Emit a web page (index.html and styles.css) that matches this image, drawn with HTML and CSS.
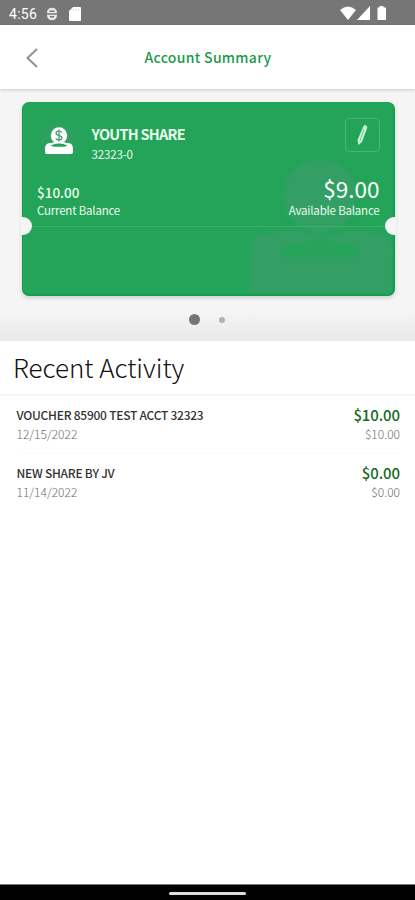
FILE: index.html
```html
<!DOCTYPE html>
<html lang="en">
<head>
<meta charset="utf-8">
<title>Account Summary</title>
<link rel="stylesheet" href="styles.css">
</head>
<body>
<div class="status">
  <span class="time">4:56</span>
  <svg class="s-face" viewBox="0 0 12 14"><path d="M1 5.500a5 4.800 0 0 1 10 0v3a5 4.800 0 0 1-10 0z" fill="#e8e8e8"/><path d="M3.500 4.300h5M1 7h10M4 9.800h4" stroke="#777" stroke-width="1.400" fill="none"/></svg>
  <svg class="s-card" viewBox="0 0 12 14"><path d="M4 0h7q1 0 1 1v12q0 1-1 1H1q-1 0-1-1V4z" fill="#fff"/><path d="M4.500 2v2M7 2v2M9.500 2v2" stroke="#ddd" stroke-width=".9"/></svg>
  <svg class="s-right" viewBox="0 0 48 15"><path d="M0 4Q8-3 16 4L8 14z" fill="#fff"/><path d="M30 0v14H17z" fill="#fff"/><path d="M39.500 0h4v1.500H46V14h-8.500V1.500h2z" fill="#fff"/></svg>
</div>
<header class="header">
  <svg class="back" viewBox="0 0 12 20"><path d="M11 1L1.500 10 11 19" fill="none" stroke="#8e8e9a" stroke-width="1.900"/></svg>
  <h1>Account Summary</h1>
</header>
<section class="carousel">
  <article class="card">
    <svg class="watermark" viewBox="0 0 144 134"><circle cx="71" cy="36" r="37"/><path d="M0 91q0-18 18-18h8q14-6 28-1l17 6 22-6q14-5 28 1h5q18 0 18 18v43H0z"/><path class="slot" d="M31 88q40-14 80 0v9H31z"/></svg>
    <div class="card-top">
      <div class="badge"><svg viewBox="0 0 30 28"><circle cx="15" cy="8.500" r="8.200" fill="#fff"/><path d="M1 22q0-6 5-6h1q4-2 8 1 4-3 8-1h1q5 0 5 6v3q0 2-2 2H3q-2 0-2-2z" fill="#fff"/><path d="M6.500 18.500q8.500-4 17 0l-3 1.300H9.500z" fill="#23a459"/><path d="M18 5.500q-1-1.500-3-1.500-3 0-3 2.200c0 3.200 6 1.400 6 4.400q0 2.400-3 2.400-2.200 0-3.200-1.600M15 2.500v12" fill="none" stroke="#46986a" stroke-width="1.200"/></svg></div>
      <div class="account"><h2>YOUTH SHARE</h2><p>32323-0</p></div>
      <button class="edit" aria-label="Edit"><svg viewBox="0 0 12 22"><path d="M7.300 2.500Q8.500.4 10.300 1.500q1.500 1 .8 2.800L6 18l-3.600 3L1.500 16z" fill="#c8f0d3"/><path d="M8 5L4 17" stroke="#7fce9a" stroke-width="1"/></svg></button>
    </div>
    <div class="balances">
      <div><strong class="current">$10.00</strong><span>Current Balance</span></div>
      <div class="right"><strong class="available">$9.00</strong><span>Available Balance</span></div>
    </div>
    <div class="divider"></div>
  </article>
  <div class="dots"><i class="on"></i><i></i></div>
</section>
<main>
  <h2 class="section">Recent Activity</h2>
  <ul>
    <li><div><b>VOUCHER 85900 TEST ACCT 32323</b><span>12/15/2022</span></div><div class="right"><strong>$10.00</strong><span>$10.00</span></div></li>
    <li><div><b>NEW SHARE BY JV</b><span>11/14/2022</span></div><div class="right"><strong>$0.00</strong><span>$0.00</span></div></li>
  </ul>
</main>
<footer class="nav"><i></i></footer>
</body>
</html>
```
FILE: styles.css
```css
* { box-sizing: border-box; margin: 0; padding: 0; }
body { width: 415px; height: 900px; overflow: hidden; display: flex; flex-direction: column; background: #fff; font-family: "Noto Sans CJK SC", "Noto Sans", sans-serif; }
svg { display: block; flex: none; }
.status { height: 25px; flex: none; background: #767676; display: flex; align-items: center; padding: 2px 27px 0 9px; }
.time { font: 400 14px/20px Roboto, sans-serif; color: #fff; width: 37px; letter-spacing: .3px; }
.s-face { width: 12px; height: 14px; }
.s-card { width: 12px; height: 14px; margin-left: 11px; }
.s-right { width: 48px; height: 15px; margin-left: auto; }
.header { position: relative; z-index: 1; height: 64px; flex: none; display: flex; align-items: center; padding: 2px 0 0 26px; background: #fff; box-shadow: 0 1px 3px rgba(0,0,0,.18); }
.back { width: 12px; height: 20px; }
.header h1 { margin-left: 106.500px; margin-top: -3px; font-size: 14px; line-height: 20px; font-weight: 500; color: #229a49; letter-spacing: .3px; white-space: nowrap; }
.carousel { height: 252px; flex: none; padding: 13px 20.500px 0 21.500px; background: linear-gradient(#f5f5f5 0 88%, #e9e9e9); }
.card { position: relative; height: 194px; border-radius: 7px; background: #23a459; border: 1px solid #119e4f; border-top-color: #20a457; border-bottom-width: 2px; border-right-width: 2px; box-shadow: 0 2px 4px rgba(70,60,50,.2); color: #e9fcec; padding: 0 13px 0 14.500px; }
.card::before, .card::after { content: ""; position: absolute; top: 114px; width: 11px; height: 18px; background: #f5f5f5; }
.card::before { left: -2px; border-radius: 0 9px 9px 0; }
.card::after { right: -3px; border-radius: 9px 0 0 9px; }
.watermark { position: absolute; right: 0; bottom: 0; width: 144px; height: 134px; fill: #339f65; filter: blur(2px); clip-path: inset(0 round 0 0 5px 0); }
.watermark .slot { fill: #25a45a; }
.card-top { position: relative; display: flex; height: 78px; padding-top: 15px; }
.badge { width: 44px; height: 44px; margin-top: 1px; border-radius: 50%; background: radial-gradient(#309f62 40%, #23a459 70%); display: flex; align-items: center; justify-content: center; }
.badge svg { width: 30px; height: 28px; }
.account { margin-left: 10.500px; padding-top: 6px; white-space: nowrap; }
.account h2 { font-size: 14.500px; line-height: 20px; font-weight: 700; letter-spacing: -.75px; }
.account p { font-size: 11.500px; line-height: 20px; letter-spacing: -.15px; }
.edit { margin-left: auto; width: 35px; height: 34px; border: 1px solid #4cb573; border-radius: 4px; background: none; display: flex; align-items: center; justify-content: center; }
.edit svg { width: 12px; height: 22px; }
.balances { position: relative; display: flex; justify-content: space-between; height: 45px; white-space: nowrap; }
.balances strong, .balances span, li b, li strong, li span { display: block; white-space: nowrap; }
.balances > div { display: flex; flex-direction: column; justify-content: flex-end; padding-bottom: 7px; }
.balances span { font-size: 11.500px; line-height: 17px; letter-spacing: -.2px; }
.right { display: flex; flex-direction: column; align-items: flex-end; }
.current { font-size: 13.500px; line-height: 20px; font-weight: 500; }
.available { font-size: 22.500px; line-height: 32px; font-weight: 400; margin-bottom: -2px; color: #fff; }
.divider { position: relative; height: 1px; background: #3bb069; margin: 0 -5px; }
.dots { display: flex; align-items: center; justify-content: center; gap: 19px; height: 11px; margin-top: 18px; padding-right: 3px; }
.dots i { width: 6px; height: 6px; border-radius: 50%; background: #b2b2b2; }
.dots .on { width: 11px; height: 11px; background: #757575; }
main { flex: 1; }
.section { height: 55px; border-bottom: 2px solid #f7f7f7; padding: 7px 0 0 13px; font-size: 26px; line-height: 38px; font-weight: 300; color: #111; white-space: nowrap; }
ul { list-style: none; padding: 0 15px 0 16.500px; }
li { height: 58px; display: flex; justify-content: space-between; padding-top: 9px; border-bottom: 1px solid #fbfbfb; }
li:last-child { border-bottom: 0; }
li b { font-size: 12px; line-height: 20px; font-weight: 500; color: #333; letter-spacing: -.25px; }
li span { font-size: 12px; line-height: 18px; color: #6c6c6c; font-weight: 300; }
li strong { font-size: 15px; line-height: 20px; font-weight: 500; color: #17691f; letter-spacing: -.1px; }
.nav { height: 16px; flex: none; background: #000; border-top: 1px solid #777; display: flex; justify-content: center; padding-top: 7px; }
.nav i { width: 77px; height: 3px; border-radius: 2px; background: #ddd; }
```
